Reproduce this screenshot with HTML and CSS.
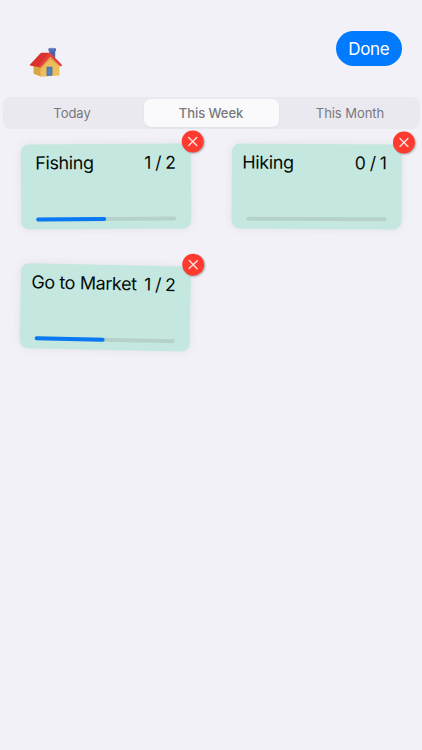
FILE: index.html
```html
<!DOCTYPE html>
<html lang="en">
<head>
<meta charset="utf-8">
<meta name="viewport" content="width=device-width, initial-scale=1">
<title>Goals</title>
<link rel="stylesheet" href="styles.css">
</head>
<body>
<header class="topbar">
  <svg class="home" viewBox="0 0 34 32" role="img" aria-label="Home">
    <path fill="#4a62a8" d="M20.300 3.500h5.900V13l-5.900-3z"/>
    <path fill="#536fb8" d="M19.400 2.600q3.900-1.600 7.600 0v2.500q-3.700 1.400-7.600 0z"/>
    <path fill="#7890cb" d="M19.600 2.600q3.700-1.300 7.200 0-3.500 1.100-7.200 0z"/>
    <path fill="#dba544" d="M4.500 18l7.500 2v10.500L5.200 28q-.7-.3-.7-1z"/>
    <path fill="#efbd5b" d="M11.500 20.500L21.300 10l9.200 8.500v10.300q0 .7-.7.800l-17.300 1.200q-1 0-1-.9z"/>
    <path fill="#d9a04b" d="M11.500 21.500l9.800-10.200 9.200 8v1.200l-9-7.200-10 9.700z"/>
    <path fill="#d9322f" d="M11.500 7.200q.5-.5 1.200-.5h7.800l-9.500 14.500-9.300-1.400q-1.200-.4-.4-1.500z"/>
    <path fill="#e5403c" d="M19.500 7q1-.6 1.900.1l11.300 11.300q.7.8-.1 1.500-.7.600-1.500 0l-9.700-9.100-9.500 10.300q-1 1-2.200.2-.7-.6.1-1.600z"/>
    <path fill="#416fae" d="M17.600 20.800h5.800v8.800l-5.800.4z"/>
    <path fill="#4f82bd" d="M18.400 21.600h4.200v7.400l-4.200.3z"/>
  </svg>
  <button class="done">Done</button>
</header>
<nav class="segments">
  <button class="segment">Today</button>
  <button class="segment selected">This Week</button>
  <button class="segment">This Month</button>
</nav>
<main class="cards">
  <article class="card fishing">
    <div class="heading"><h2>Fishing</h2><span class="count">1 / 2</span></div>
    <div class="track"><div class="fill"></div></div>
    <button class="remove" aria-label="Remove Fishing"><svg viewBox="0 0 22 22"><path d="M7 7l8 8M15 7l-8 8"/></svg></button>
  </article>
  <article class="card hiking">
    <div class="heading"><h2>Hiking</h2><span class="count">0 / 1</span></div>
    <div class="track"></div>
    <button class="remove" aria-label="Remove Hiking"><svg viewBox="0 0 22 22"><path d="M7 7l8 8M15 7l-8 8"/></svg></button>
  </article>
  <article class="card market">
    <div class="heading"><h2>Go to Market</h2><span class="count">1 / 2</span></div>
    <div class="track"><div class="fill"></div></div>
    <button class="remove" aria-label="Remove Go to Market"><svg viewBox="0 0 22 22"><path d="M7 7l8 8M15 7l-8 8"/></svg></button>
  </article>
</main>
</body>
</html>
```
FILE: styles.css
```css
* { box-sizing: border-box; }
body {
  margin: 0;
  min-height: 750px;
  background: #f2f1f8;
  color: #050c0a;
  font-family: Inter, "Liberation Sans", sans-serif;
}
button { border: 0; padding: 0; font-family: inherit; }
.topbar {
  display: flex;
  justify-content: space-between;
  align-items: flex-start;
  height: 97px;
  padding: 31px 20.5px 0 29px;
}
.home { width: 34px; height: 32px; margin-top: 15px; }
.done {
  width: 65.500px;
  height: 35px;
  padding-top: 1px;
  border-radius: 18px;
  background: #007aff;
  color: #fff;
  font-size: 17px;
  line-height: 34px;
  letter-spacing: -.35px;
}
.segments {
  display: grid;
  grid-template-columns: 139px 139px 139px;
  width: 417px;
  height: 32px;
  margin-left: 2.500px;
  border-radius: 8px;
  background: #eae9ef;
}
.segment {
  background: none;
  color: #78787d;
  font-size: 13px;
  letter-spacing: -.05px;
}
.segment.selected {
  width: 135px;
  height: 28px;
  margin: 2px;
  border-radius: 7px;
  background: #fafafc;
  box-shadow: 0 1px 3px rgba(0, 0, 0, .05);
  font-weight: 500;
}
.cards {
  display: grid;
  grid-template-columns: 170px 170px;
  grid-template-rows: 85px 85px;
  column-gap: 40.500px;
  row-gap: 35.500px;
  padding: 15px 0 0 21px;
}
.card {
  position: relative;
  display: flex;
  flex-direction: column;
  justify-content: space-between;
  padding: 6px 15px 8px;
  border-radius: 8px;
  background: #c4e8df;
  box-shadow: 0 0 10px rgba(0, 0, 0, .07);
}
.fishing { transform: rotate(-.35deg); }
.hiking { transform: translateX(-.3px) rotate(.3deg); }
.market { transform: translate(-.7px, -.2px) rotate(1.2deg); }
.heading { display: flex; justify-content: space-between; height: 25px; line-height: 25px; }
.heading h2 { margin: 0; font-size: 18px; font-weight: 400; letter-spacing: -.4px; white-space: nowrap; }
.fishing h2 { margin-left: -.7px; }
.hiking h2 { margin-left: -4.500px; }
.market h2 { margin-left: -4.500px; }
.count { font-size: 17.500px; word-spacing: -1.200px; white-space: nowrap; }
.track { height: 4px; border-radius: 2px; background: #b4d2cb; }
.fill { width: 50%; height: 4px; border-radius: 2px; background: #0879f2; }
.remove {
  position: absolute;
  top: -13.300px;
  right: -13px;
  width: 22px;
  height: 22px;
  border-radius: 50%;
  background: #ff3b30;
  box-shadow: 1px 1px 2px rgba(0, 0, 0, .3);
}
.remove svg { display: block; width: 22px; height: 22px; fill: none; stroke: #ffe5e2; stroke-width: 1.300; stroke-linecap: round; }
```
